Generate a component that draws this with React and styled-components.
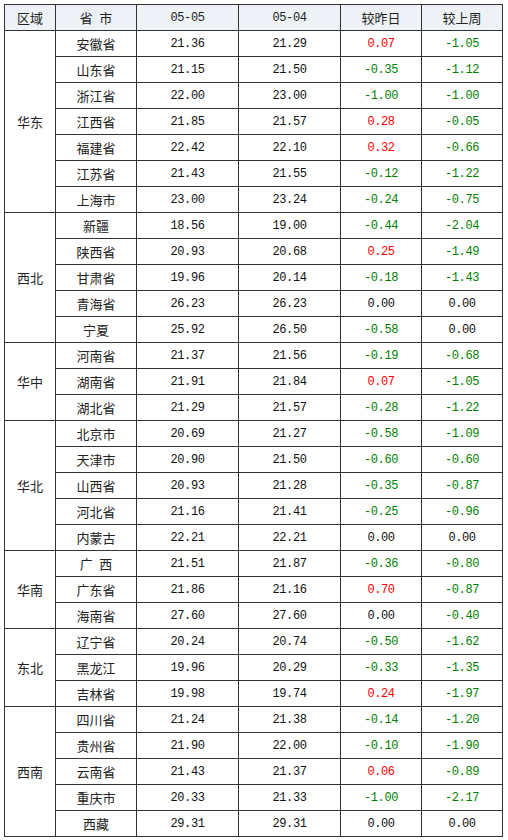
import React from "react";
import styled, { createGlobalStyle } from "styled-components";

const data = [
  {
    region: "华东",
    rows: [
      ["安徽省", "21.36", "21.29", "0.07", "-1.05"],
      ["山东省", "21.15", "21.50", "-0.35", "-1.12"],
      ["浙江省", "22.00", "23.00", "-1.00", "-1.00"],
      ["江西省", "21.85", "21.57", "0.28", "-0.05"],
      ["福建省", "22.42", "22.10", "0.32", "-0.66"],
      ["江苏省", "21.43", "21.55", "-0.12", "-1.22"],
      ["上海市", "23.00", "23.24", "-0.24", "-0.75"],
    ],
  },
  {
    region: "西北",
    rows: [
      ["新疆", "18.56", "19.00", "-0.44", "-2.04"],
      ["陕西省", "20.93", "20.68", "0.25", "-1.49"],
      ["甘肃省", "19.96", "20.14", "-0.18", "-1.43"],
      ["青海省", "26.23", "26.23", "0.00", "0.00"],
      ["宁夏", "25.92", "26.50", "-0.58", "0.00"],
    ],
  },
  {
    region: "华中",
    rows: [
      ["河南省", "21.37", "21.56", "-0.19", "-0.68"],
      ["湖南省", "21.91", "21.84", "0.07", "-1.05"],
      ["湖北省", "21.29", "21.57", "-0.28", "-1.22"],
    ],
  },
  {
    region: "华北",
    rows: [
      ["北京市", "20.69", "21.27", "-0.58", "-1.09"],
      ["天津市", "20.90", "21.50", "-0.60", "-0.60"],
      ["山西省", "20.93", "21.28", "-0.35", "-0.87"],
      ["河北省", "21.16", "21.41", "-0.25", "-0.96"],
      ["内蒙古", "22.21", "22.21", "0.00", "0.00"],
    ],
  },
  {
    region: "华南",
    rows: [
      ["广\u2002西", "21.51", "21.87", "-0.36", "-0.80"],
      ["广东省", "21.86", "21.16", "0.70", "-0.87"],
      ["海南省", "27.60", "27.60", "0.00", "-0.40"],
    ],
  },
  {
    region: "东北",
    rows: [
      ["辽宁省", "20.24", "20.74", "-0.50", "-1.62"],
      ["黑龙江", "19.96", "20.29", "-0.33", "-1.35"],
      ["吉林省", "19.98", "19.74", "0.24", "-1.97"],
    ],
  },
  {
    region: "西南",
    rows: [
      ["四川省", "21.24", "21.38", "-0.14", "-1.20"],
      ["贵州省", "21.90", "22.00", "-0.10", "-1.90"],
      ["云南省", "21.43", "21.37", "0.06", "-0.89"],
      ["重庆市", "20.33", "21.33", "-1.00", "-2.17"],
      ["西藏", "29.31", "29.31", "0.00", "0.00"],
    ],
  },
];

// 涨红跌绿，持平黑色
const tone = (v) => {
  const n = parseFloat(v);
  if (n > 0) return "up";
  if (n < 0) return "down";
  return "flat";
};

const App = () => (
  <Page>
    <GlobalStyle />
    <Table>
      <colgroup>
        <col style={{ width: 51 }} />
        <col style={{ width: 81 }} />
        <col style={{ width: 102 }} />
        <col style={{ width: 102 }} />
        <col style={{ width: 81 }} />
        <col style={{ width: 81 }} />
      </colgroup>
      <thead>
        <tr>
          <Head>区域</Head>
          <Head>省{"\u2002"}市</Head>
          <Head $num>05-05</Head>
          <Head $num>05-04</Head>
          <Head>较昨日</Head>
          <Head>较上周</Head>
        </tr>
      </thead>
      <tbody>
        {data.map((group) =>
          group.rows.map((r, i) => (
            <tr key={group.region + r[0]}>
              {i === 0 && <Region rowSpan={group.rows.length}>{group.region}</Region>}
              <Name>{r[0]}</Name>
              <Num>{r[1]}</Num>
              <Num>{r[2]}</Num>
              <Num $tone={tone(r[3])}>{r[3]}</Num>
              <Num $tone={tone(r[4])}>{r[4]}</Num>
            </tr>
          ))
        )}
      </tbody>
    </Table>
  </Page>
);

export default App;

const GlobalStyle = createGlobalStyle`
  body {
    margin: 0;
    background: #fff;
  }
`;

const Page = styled.div`
  padding: 4px;
`;

const Table = styled.table`
  border-collapse: collapse;
  table-layout: fixed;
  width: 499px;
  border: 1px solid #333;
  color: #222;
`;

const Cell = styled.td`
  height: 25px;
  padding: 0;
  border: 1px solid #333;
  text-align: center;
  vertical-align: middle;
  white-space: pre;
  font-family: "Noto Sans CJK SC", "Liberation Sans", sans-serif;
  font-size: 13px;
  line-height: 16px;
`;

const Head = styled(Cell).attrs({ as: "th" })`
  font-weight: normal;
  background: #eef2f7;
  font-family: ${(p) =>
    p.$num
      ? `"Liberation Mono", "Noto Sans CJK SC", monospace`
      : `"Noto Sans CJK SC", "Liberation Sans", sans-serif`};
  font-size: ${(p) => (p.$num ? "12px" : "13px")};
  letter-spacing: ${(p) => (p.$num ? "-0.4px" : "0")};
`;

const Region = styled(Cell)``;

const Name = styled(Cell)``;

const Num = styled(Cell)`
  font-family: "Liberation Mono", monospace;
  font-size: 12px;
  letter-spacing: -0.4px;
  color: ${(p) =>
    p.$tone === "up" ? "#ff0000" : p.$tone === "down" ? "#008000" : "#111"};
`;
